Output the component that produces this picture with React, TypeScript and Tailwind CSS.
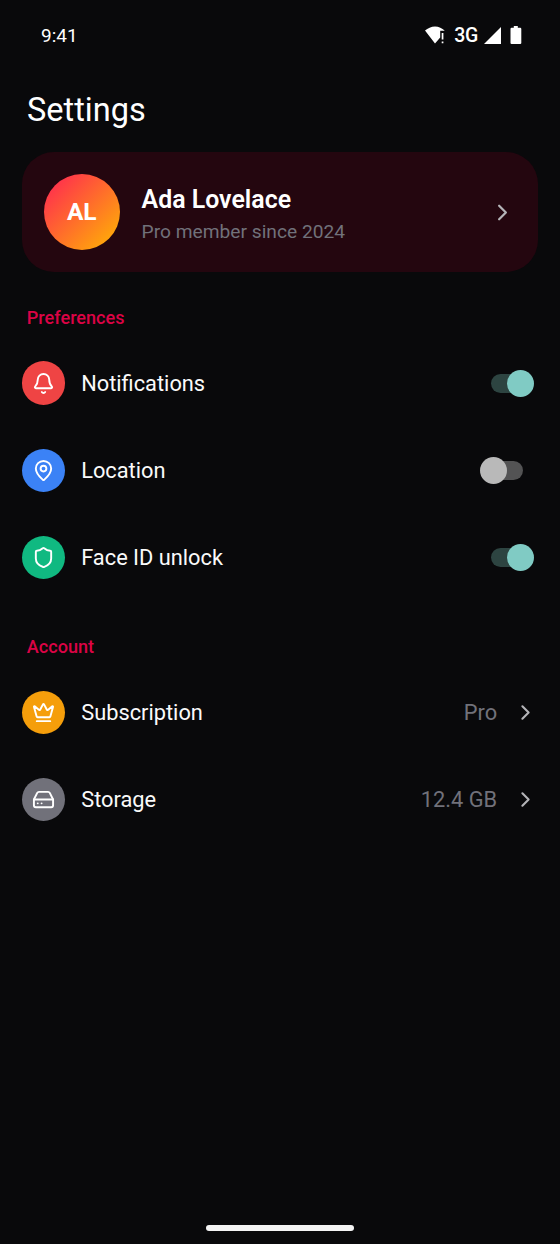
import {
  Bell,
  ChevronRight,
  Crown,
  HardDrive,
  MapPin,
  Shield,
  type LucideIcon,
} from "lucide-react";
import { useState } from "react";
import clsx from "clsx";

const StatusBar = () => {
  return (
    <div className="flex h-[70px] items-center justify-between pl-[41px] pr-[38px] text-[19px] text-white">
      <span className="pt-[2px]">9:41</span>
      <div className="flex items-center">
        <svg width="20" height="18" viewBox="0 0 20 18" fill="currentColor">
          <path d="M0 4.6C2.8 2 6.2.4 10 .4s7.2 1.6 9.6 4.2l-.3.2H15.2v6.8L10 17.6z" />
          <path d="M16.7 7h1.7v6.6h-1.7zM16.7 15.4h1.7v1.9h-1.7z" />
        </svg>
        <span className="ml-[9.5px] pt-[2px] text-[19.5px] font-medium tracking-[-0.3px]">
          3G
        </span>
        <svg
          className="ml-[6px]"
          width="17"
          height="17"
          viewBox="0 0 17 17"
          fill="currentColor"
        >
          <path d="M17 0v17H0z" />
        </svg>
        <svg
          className="ml-[9px]"
          width="12"
          height="18"
          viewBox="0 0 12 18"
          fill="currentColor"
        >
          <path d="M3.8 0h4v1.8h2.4q1.1 0 1.1 1.1v14q0 1.1-1.1 1.1H1.6Q.5 18 .5 16.9v-14q0-1.1 1.1-1.1h2.2z" />
        </svg>
      </div>
    </div>
  );
};

const Toggle = ({ label, initial }: { label: string; initial: boolean }) => {
  const [on, setOn] = useState(initial);

  return (
    <button
      type="button"
      role="switch"
      aria-checked={on}
      aria-label={label}
      onClick={() => setOn(!on)}
      className="mr-[4.7px] grid w-[54px] items-center"
    >
      <span
        className={clsx(
          "col-start-1 row-start-1 h-[19px] w-8 justify-self-center rounded-full",
          on ? "bg-[#2d4441]" : "bg-[#535354]"
        )}
      />
      <span
        className={clsx(
          "col-start-1 row-start-1 size-[27px] rounded-full",
          on ? "justify-self-end bg-[#80cbc4]" : "justify-self-start bg-[#b9b9b9]"
        )}
      />
    </button>
  );
};

type RowProps = {
  icon: LucideIcon;
  color: string;
  label: string;
  value?: string;
  enabled?: boolean;
};

const Row = ({ icon: Icon, color, label, value, enabled }: RowProps) => {
  return (
    <div className="flex h-[87.1px] items-center">
      <div
        className={clsx(
          "flex size-[43.6px] items-center justify-center rounded-full text-white",
          color
        )}
      >
        <Icon size={23} strokeWidth={2} />
      </div>
      <span className="ml-[15.8px] flex-1 pt-[1.5px] text-[21.8px] text-[#fafafa]">
        {label}
      </span>
      {value ? (
        <div className="flex items-center">
          <span className="pt-[1.5px] text-[21.8px] text-[#71717a]">
            {value}
          </span>
          <ChevronRight
            className="ml-4 text-[#b4b4b8]"
            size={25}
            strokeWidth={2}
          />
        </div>
      ) : (
        <Toggle label={label} initial={!!enabled} />
      )}
    </div>
  );
};

const sections: { title: string; rows: RowProps[] }[] = [
  {
    title: "Preferences",
    rows: [
      {
        icon: Bell,
        color: "bg-[#ef4444]",
        label: "Notifications",
        enabled: true,
      },
      { icon: MapPin, color: "bg-[#3b82f6]", label: "Location" },
      {
        icon: Shield,
        color: "bg-[#10b981]",
        label: "Face ID unlock",
        enabled: true,
      },
    ],
  },
  {
    title: "Account",
    rows: [
      {
        icon: Crown,
        color: "bg-[#f59e0b]",
        label: "Subscription",
        value: "Pro",
      },
      {
        icon: HardDrive,
        color: "bg-[#71717a]",
        label: "Storage",
        value: "12.4 GB",
      },
    ],
  },
];

const App = () => {
  return (
    <main className="flex h-[1244px] w-[560px] flex-col bg-[#09090b] font-[Roboto,sans-serif] text-white">
      <StatusBar />
      <h1 className="mt-[18px] pl-[27px] text-[32.5px] leading-[44px]">
        Settings
      </h1>
      <div className="mx-[22px] mt-[20.3px] flex h-[119.5px] items-center rounded-[32px] bg-[#24060f] px-[21.6px]">
        <div className="flex size-[76.3px] items-center justify-center rounded-full bg-linear-to-br/srgb from-[#ff2056] to-[#ffb900] text-[24.5px] font-bold">
          AL
        </div>
        <div className="ml-[21.7px] flex-1 pt-[6.5px]">
          <p className="text-[24.9px] font-semibold leading-[33px]">
            Ada Lovelace
          </p>
          <p className="text-[19.2px] leading-[32px] text-[#71717a]">
            Pro member since 2024
          </p>
        </div>
        <ChevronRight className="text-[#b4b4b8]" size={27} strokeWidth={2} />
      </div>
      {sections.map((section) => (
        <section key={section.title} className="mt-[33px] px-[21.8px]">
          <h2 className="mb-[9.9px] pl-[5px] text-[18.1px] font-medium leading-[25px] text-[#dc0345]">
            {section.title}
          </h2>
          {section.rows.map((row) => (
            <Row key={row.label} {...row} />
          ))}
        </section>
      ))}
      <div className="mx-auto mb-[13px] mt-auto h-[6px] w-[148px] rounded-full bg-[#f4f4f4]" />
    </main>
  );
};

export default App;
